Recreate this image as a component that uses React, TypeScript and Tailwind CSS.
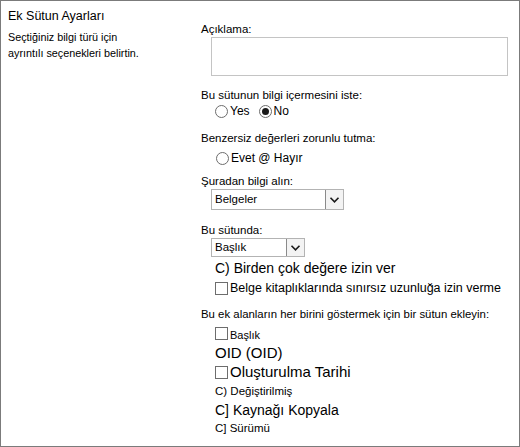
import React from "react";

const font = { fontFamily: '"Liberation Sans", Arial, sans-serif' };

function Radio({ checked = false }: { checked?: boolean }) {
  return (
    <span className="inline-flex h-[13px] w-[13px] shrink-0 items-center justify-center rounded-full border border-[#6d6d6d] bg-white">
      {checked && <span className="h-[7px] w-[7px] rounded-full bg-[#1a1a1a]" />}
    </span>
  );
}

function Box() {
  return <span className="inline-block h-[13px] w-[13px] shrink-0 border border-[#6d6d6d] bg-white" />;
}

function Select({ value, width }: { value: string; width: string }) {
  return (
    <div className={`ml-[10px] flex items-stretch border border-[#b3b3b3] bg-white ${width}`}>
      <div className="flex flex-1 items-center pl-[3px] text-[11.5px] text-black">{value}</div>
      <div className="flex w-[18px] items-center justify-center border-l border-[#8a8a8a] bg-[#f3f3f3]">
        <svg width="11" height="8" viewBox="0 0 11 8">
          <path d="M1.5 1.8 L5.5 5.8 L9.5 1.8" fill="none" stroke="#1a1a1a" strokeWidth="1.6" />
        </svg>
      </div>
    </div>
  );
}

export default function App() {
  return (
    <div style={font} className="box-border flex h-[447px] w-[520px] border-[1.5px] border-[#7b7b7b] bg-white text-black">
      {/* section description */}
      <div className="w-[200px] shrink-0 pl-[7px] pt-[6px]">
        <div className="h-[18px] text-[12.5px] leading-[18px]">Ek Sütun Ayarları</div>
        <div className="mt-[4px] text-[10.8px] leading-[16px]">
          Seçtiğiniz bilgi türü için
          <br />
          ayrıntılı seçenekleri belirtin.
        </div>
      </div>

      {/* field options */}
      <div className="flex-1 pt-[21px] text-[11.5px]">
        <div className="h-[15px] leading-[15px]">Açıklama:</div>
        <div className="ml-[10px] h-[39px] w-[297px] border border-[#c4c4c4] bg-white" />

        <div className="mt-[11px] h-[16px] leading-[16px]">Bu sütunun bilgi içermesini iste:</div>
        <div className="flex h-[16px] items-center pl-[14px] text-[12px]">
          <Radio />
          <span className="ml-[2px] mr-[9px]">Yes</span>
          <Radio checked />
          <span className="ml-[2px]">No</span>
        </div>

        <div className="mt-[11px] h-[16px] leading-[16px]">Benzersiz değerleri zorunlu tutma:</div>
        <div className="mt-[4px] flex h-[16px] items-center pl-[15px] text-[12px]">
          <Radio />
          <span className="ml-[2px]">Evet @ Hayır</span>
        </div>

        <div className="mt-[8px] h-[15px] leading-[15px]">Şuradan bilgi alın:</div>
        <div className="h-[21px]">
          <Select value="Belgeler" width="h-[21px] w-[133px]" />
        </div>

        <div className="mt-[12px] h-[16px] leading-[16px]">Bu sütunda:</div>
        <div className="h-[19px]">
          <Select value="Başlık" width="h-[19px] w-[94px]" />
        </div>

        <div className="mt-[2px] h-[18px] pl-[14px] text-[14px] leading-[18px]">C) Birden çok değere izin ver</div>
        <div className="mt-[2px] flex h-[18px] items-center pl-[14px] text-[12.5px]">
          <Box />
          <span className="ml-[2px]">Belge kitaplıklarında sınırsız uzunluğa izin verme</span>
        </div>

        <div className="mt-[9px] h-[16px] text-[11.4px] leading-[16px]">Bu ek alanların her birini göstermek için bir sütun ekleyin:</div>
        <div className="mt-[2px] flex h-[18px] items-center pl-[14px] text-[11px]">
          <Box />
          <span className="ml-[2px] mt-[4px]">Başlık</span>
        </div>
        <div className="mt-[1px] h-[20px] pl-[14px] text-[15px] leading-[20px]">OID (OID)</div>
        <div className="flex h-[18px] items-center pl-[14px] text-[15px]">
          <Box />
          <span className="ml-[2px]">Oluşturulma Tarihi</span>
        </div>
        <div className="mt-[1px] h-[18px] pl-[14px] text-[11.5px] leading-[18px]">C) Değiştirilmiş</div>
        <div className="mt-[1px] h-[18px] pl-[14px] text-[14px] leading-[18px]">C] Kaynağı Kopyala</div>
        <div className="h-[18px] pl-[14px] text-[11.5px] leading-[18px]">C] Sürümü</div>
      </div>
    </div>
  );
}
